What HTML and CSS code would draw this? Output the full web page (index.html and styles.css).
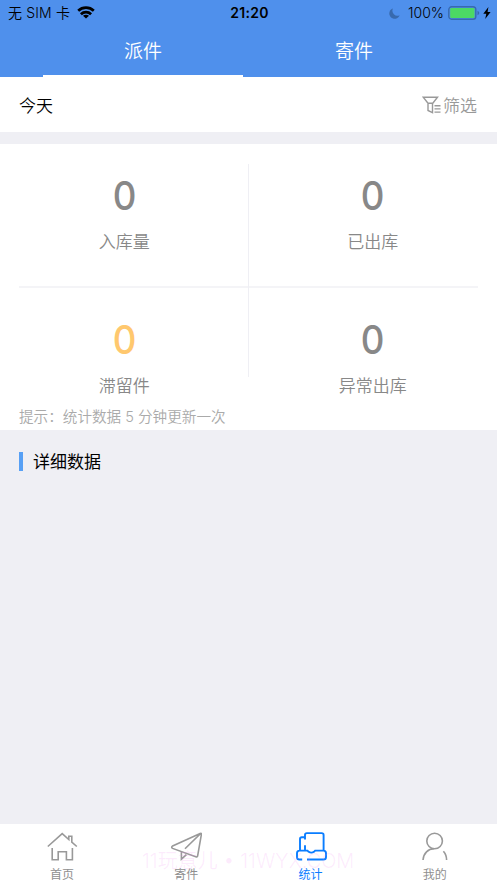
FILE: index.html
```html
<!DOCTYPE html>
<html lang="zh-CN">
<head>
<meta charset="utf-8">
<title>统计</title>
<link rel="stylesheet" href="styles.css">
</head>
<body>
<div class="app">
  <header class="header">
    <div class="status">
      <div class="status-left">
        <span>无 SIM 卡</span>
        <svg class="wifi" width="18" height="13" viewBox="0 0 18 13" fill="none" stroke="#000" stroke-width="2.7"><path d="M1.2 4.7C5.6.6 12.4.6 16.8 4.7"/><path d="M3.9 8.2c2.9-2.8 7.3-2.8 10.2 0"/><path d="M9 12.5 6 9.8c1.6-1.4 4.4-1.4 6 0z" fill="#000" stroke="none"/></svg>
      </div>
      <span class="time">21:20</span>
      <div class="status-right">
        <svg class="moon" width="11" height="11" viewBox="0 0 11 11" fill="#386aae"><path d="M4 .4A5.3 5.3 0 1 0 10.6 7.2 5 5 0 0 1 4 .4z"/></svg>
        <span class="percent">100%</span>
        <svg class="battery" width="32" height="14" viewBox="0 0 32 14"><rect x=".8" y=".8" width="27" height="12.4" rx="2.8" fill="none" stroke="#386aae" stroke-width="1.4"/><rect x="2.2" y="2" width="24.3" height="10" rx="1.2" fill="#4cd964"/><path d="M29.5 4.8q1.8.7 1.8 2.2t-1.8 2.2z" fill="#386aae"/></svg>
        <svg class="bolt" width="8" height="12" viewBox="0 0 8 12"><path d="M5.4 0 .3 6.8h3L2.2 12 7.6 4.9h-3z"/></svg>
      </div>
    </div>
    <nav class="tabs">
      <div class="tab active">派件</div>
      <div class="tab">寄件</div>
    </nav>
  </header>
  <div class="filter">
    <span>今天</span>
    <div class="filter-action">
      <svg width="20" height="18" viewBox="0 0 20 18" fill="none" stroke="#999" stroke-width="1.4"><path d="M1.2 1.2h14.3l-4.7 6H6zM6 7.2v7.3l4.5 2.2V7.2M12.5 9.7h6M12.5 12.9h6M12.5 16.1h6"/></svg>
      <span>筛选</span>
    </div>
  </div>
  <section class="stats">
    <div class="grid">
      <div class="stat"><b>0</b><span>入库量</span></div>
      <div class="stat"><b>0</b><span>已出库</span></div>
      <div class="stat"><b class="warn">0</b><span>滞留件</span></div>
      <div class="stat"><b>0</b><span>异常出库</span></div>
      <i class="divider"></i>
    </div>
    <p class="hint">提示：统计数据 5 分钟更新一次</p>
  </section>
  <section class="details"><h2>详细数据</h2></section>
  <nav class="bottom">
    <div class="item">
      <svg width="32" height="32" viewBox="0 0 32 32"><path d="M1.8 16.5 16.2 3.6l6.6 5.9V6.2h3v6l5 4.3M6.2 18v11.8h6v-8h8.2v8h6V18"/></svg>
      <span>首页</span>
    </div>
    <div class="item">
      <svg width="32" height="32" viewBox="0 0 32 32"><path d="M30.7 3.2 2.6 15.9q-1.8 1.2 0 2.5l23.8 8.5q1 .2 1.2-.8l3.8-21.8q.2-1.2-.7-.9L15 18.8M11.4 22v7.2l5-4.5"/></svg>
      <span>寄件</span>
    </div>
    <div class="item selected">
      <svg width="32" height="32" viewBox="0 0 32 32"><path d="M10 9.5V5q0-1.9 1.9-1.9h14.8q1.9 0 1.9 1.9v15.6M10 7.3H6.8q-1.8 0-1.8 1.8v11.5M10 15.2v5.4M7.2 29.5H4.5q-2.5 0-2.5-2.6v-3.6q0-2.7 2.5-2.7h8l1.1 1.2q2.7 1.7 5.4 0l1.1-1.2h8.4q2.5 0 2.5 2.7v3.6q0 2.6-2.5 2.6H12"/></svg>
      <span>统计</span>
    </div>
    <div class="item">
      <svg width="32" height="32" viewBox="0 0 32 32"><circle cx="15.6" cy="11" r="7.8"/><path d="M4 30C4.5 23 9.2 18.9 15 18.8M24.4 21.2q3.2 3.6 3.2 8.8"/></svg>
      <span>我的</span>
    </div>
    <div class="watermark">11玩意儿 • 11WYX.COM</div>
  </nav>
</div>
</body>
</html>
```
FILE: styles.css
```css
* { box-sizing: border-box; }
body {
  margin: 0;
  font-family: Inter, "Noto Sans CJK SC", sans-serif;
  font-weight: 350;
  color: #000;
}
svg { display: block; flex: none; }
.app {
  width: 497px;
  height: 883px;
  display: flex;
  flex-direction: column;
  background: #efeff4;
  overflow: hidden;
}
.header { height: 77px; background: #4f90ec; flex: none; }
.status {
  height: 26px;
  display: grid;
  grid-template-columns: 1fr auto 1fr;
  align-items: center;
  padding: 0 6px 0 8px;
  font-size: 14px;
  line-height: 26px;
}
.status-left, .status-right { display: flex; align-items: center; }
.status-left { gap: 7px; letter-spacing: .15px; }
.wifi { margin-top: -1px; }
.status-right { justify-content: flex-end; }
.time { font-weight: 600; font-size: 14px; letter-spacing: .25px; }
.percent { margin: 0 4px 0 8px; }
.battery { margin-right: 3px; }
.tabs { height: 51px; padding: 0 43px; display: flex; gap: 11px; }
.tab {
  width: 200px;
  text-align: center;
  line-height: 51px;
  font-size: 19px;
  color: #fff;
  border-bottom: 2.5px solid transparent;
}
.active { border-color: #fff; }
.filter {
  height: 55px;
  flex: none;
  display: flex;
  align-items: center;
  justify-content: space-between;
  padding: 0 20px 0 19px;
  background: #fff;
  font-size: 17px;
}
.filter-action { display: flex; align-items: center; gap: 1px; color: #999; }
.stats { height: 286px; flex: none; margin-top: 12px; background: #fff; }
.grid {
  position: relative;
  height: 260px;
  display: grid;
  grid-template: 144px 116px / 1fr 1fr;
}
.grid::before {
  content: "";
  position: absolute;
  left: 19px;
  right: 19px;
  top: 142px;
  height: 2px;
  background: #f4f4f7;
}
.divider {
  position: absolute;
  left: 248px;
  top: 20px;
  width: 1px;
  height: 213px;
  background: #efeff4;
}
.stat { display: flex; flex-direction: column; align-items: center; color: #888; }
.stat b {
  margin-top: 27px;
  font-size: 39px;
  font-weight: 450;
  line-height: 50px;
  transform: scaleX(.94);
}
.stat span { margin-top: 8px; font-size: 17px; line-height: 26px; }
.stat .warn { color: #ffc86e; }
.hint { margin: 0; padding: 1px 0 0 19px; font-size: 14.6px; line-height: 24px; color: #aaa; }
.details { flex: 1; padding: 22px 19px; }
h2 {
  margin: 0;
  height: 19px;
  padding-left: 10px;
  border-left: 4px solid #57a0f5;
  font-size: 17px;
  font-weight: 400;
  line-height: 20px;
}
.bottom {
  position: relative;
  height: 59px;
  flex: none;
  display: grid;
  grid-template-columns: repeat(4, 1fr);
  background: #fff;
}
.item {
  display: flex;
  flex-direction: column;
  align-items: center;
  padding-top: 6px;
  font-size: 12px;
  font-weight: 400;
  line-height: 18px;
  color: #8f8f8f;
}
.item svg { fill: none; stroke: #999; stroke-width: 1.6; }
.item span { margin-top: 4px; white-space: nowrap; }
.selected { color: #0a7dff; }
.item.selected svg { stroke: #0a7dff; stroke-width: 1.9; }
.watermark {
  position: absolute;
  left: 142px;
  top: 22px;
  font-size: 20px;
  line-height: 30px;
  white-space: nowrap;
  color: rgba(240, 130, 240, .16);
}
```
